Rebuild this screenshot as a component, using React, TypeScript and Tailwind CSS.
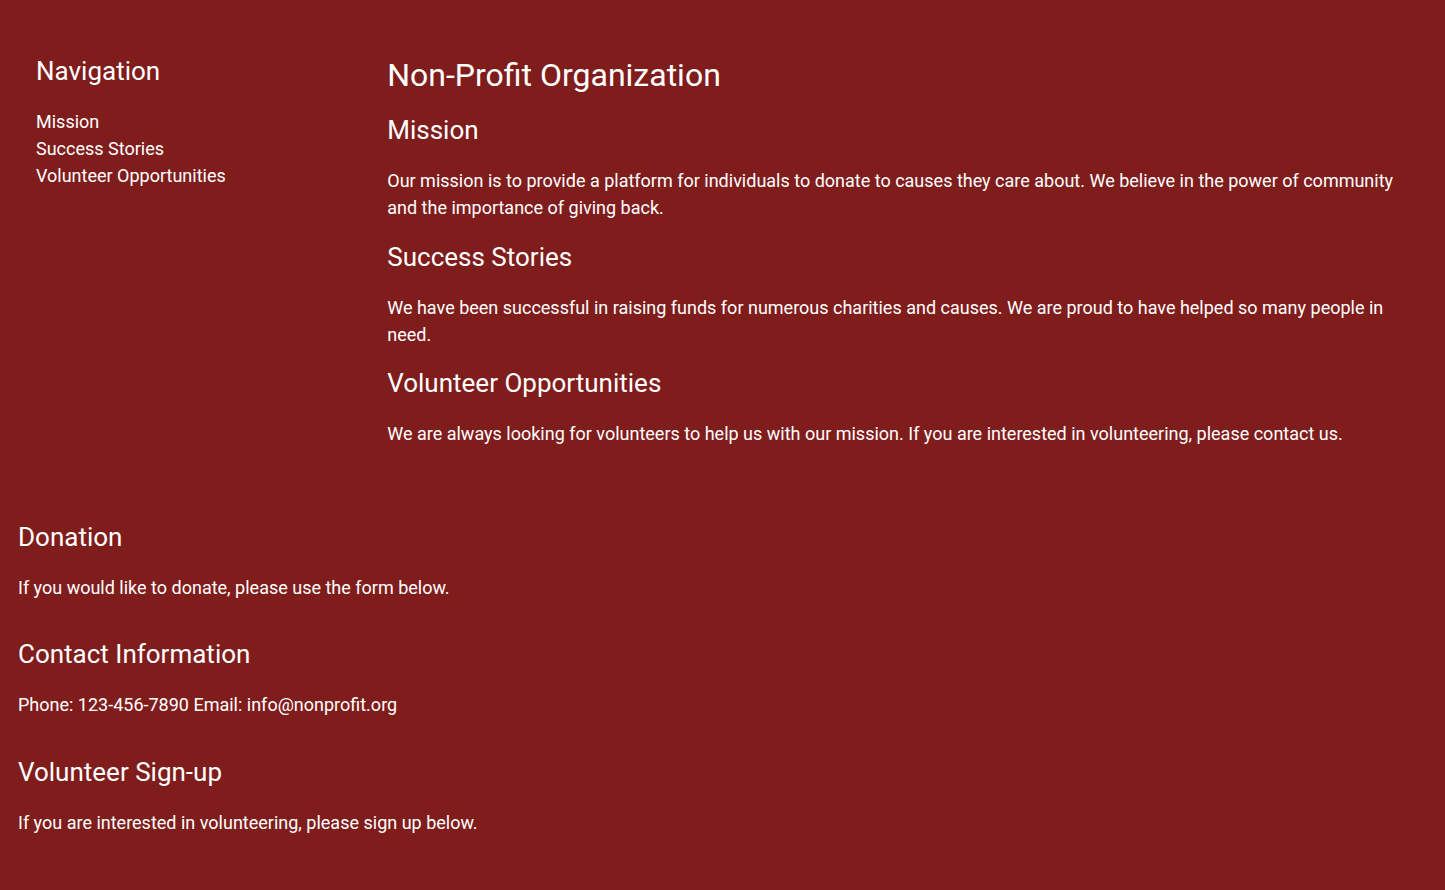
import React from "react";

export default function App() {
  return (
    <div className="min-h-screen bg-[#7f1d1d] text-white" style={{ fontFamily: 'Roboto, "Liberation Sans", sans-serif' }}>
      <div className="flex px-[18px] pt-8">
        <aside className="w-1/4 px-[18px] py-6">
          <h2 className="text-[26px] leading-[30px] mb-[22px]">Navigation</h2>
          <ul className="text-[18px] leading-[27px]">
            <li>Mission</li>
            <li>Success Stories</li>
            <li>Volunteer Opportunities</li>
          </ul>
        </aside>
        <main className="w-3/4 pl-[17px] pr-3 py-6">
          <h1 className="text-[32px] leading-[38px] mb-5">Non-Profit Organization</h1>
          <h2 className="text-[26px] leading-[32px] mb-[21px]">Mission</h2>
          <p className="text-[18px] leading-[27px] mb-5">
            Our mission is to provide a platform for individuals to donate to causes they care about. We believe in the power of community and the importance of giving back.
          </p>
          <h2 className="text-[26px] leading-[32px] mb-[21px]">Success Stories</h2>
          <p className="text-[18px] leading-[27px] mb-[19px]">
            We have been successful in raising funds for numerous charities and causes. We are proud to have helped so many people in need.
          </p>
          <h2 className="text-[26px] leading-[32px] mb-[21px]">Volunteer Opportunities</h2>
          <p className="text-[18px] leading-[27px]">
            We are always looking for volunteers to help us with our mission. If you are interested in volunteering, please contact us.
          </p>
        </main>
      </div>
      <div className="flex flex-col px-[18px] pt-[50px] pb-10">
        <section>
          <h2 className="text-[26px] leading-[32px] mb-[21px]">Donation</h2>
          <p className="text-[18px] leading-[27px]">If you would like to donate, please use the form below.</p>
        </section>
        <section className="mt-[37px]">
          <h2 className="text-[26px] leading-[32px] mb-[21px]">Contact Information</h2>
          <p className="text-[18px] leading-[27px]">Phone: 123-456-7890 Email: info@nonprofit.org</p>
        </section>
        <section className="mt-[38px]">
          <h2 className="text-[26px] leading-[32px] mb-[21px]">Volunteer Sign-up</h2>
          <p className="text-[18px] leading-[27px]">If you are interested in volunteering, please sign up below.</p>
        </section>
      </div>
    </div>
  );
}
